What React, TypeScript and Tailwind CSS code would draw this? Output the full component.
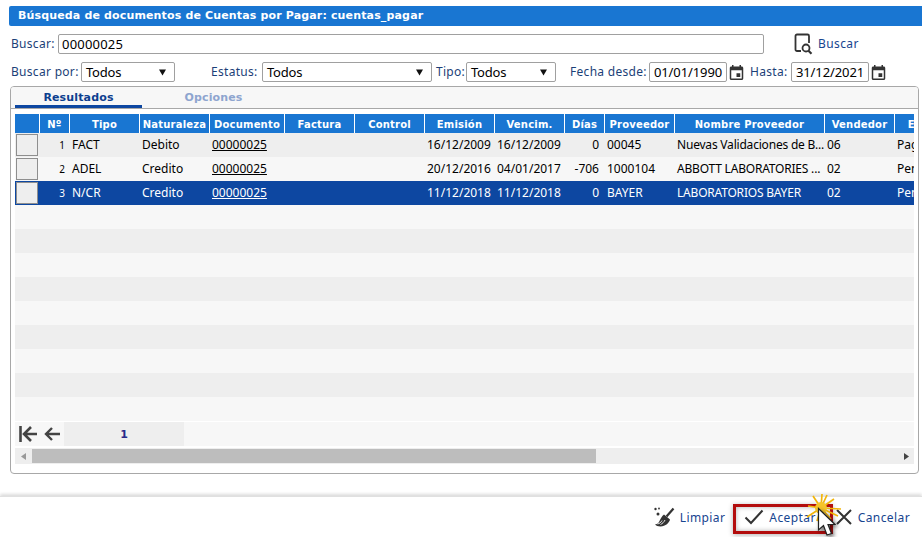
const cols = [
  { w: 24, label: "" },
  { w: 29, label: "Nº" },
  { w: 69, label: "Tipo" },
  { w: 69, label: "Naturaleza" },
  { w: 74, label: "Documento" },
  { w: 69, label: "Factura" },
  { w: 69, label: "Control" },
  { w: 69, label: "Emisión" },
  { w: 69, label: "Vencim." },
  { w: 39, label: "Días" },
  { w: 69, label: "Proveedor" },
  { w: 149, label: "Nombre Proveedor" },
  { w: 69, label: "Vendedor" },
  { w: 69, label: "Estatus" },
];

const rows = [
  ["1", "FACT", "Debito", "00000025", "", "", "16/12/2009", "16/12/2009", "0", "00045", "Nuevas Validaciones de B...", "06", "Pagado"],
  ["2", "ADEL", "Credito", "00000025", "", "", "20/12/2016", "04/01/2017", "-706", "1000104", "ABBOTT LABORATORIES ...", "02", "Pendiente"],
  ["3", "N/CR", "Credito", "00000025", "", "", "11/12/2018", "11/12/2018", "0", "BAYER", "LABORATORIOS BAYER", "02", "Pendiente"],
];

const labelClass = "text-[12px] tracking-[0.3px] text-[#1c3f78] whitespace-nowrap";
const fieldClass =
  "h-[20px] border border-[#a0a0a0] rounded-[2px] bg-white text-[13px] text-black flex items-center";

function Arrow() {
  return (
    <svg width="7" height="7" viewBox="0 0 7 7" className="shrink-0">
      <path d="M0 0.500H7L3.500 6.500Z" fill="#111" />
    </svg>
  );
}

function Sel({ w, value }: { w: string; value: string }) {
  return (
    <div className={`${fieldClass} ${w} justify-between pl-[4px] pr-[8px] pt-[1px]`}>
      <span className="tracking-[-0.2px]">{value}</span>
      <Arrow />
    </div>
  );
}

function Cal() {
  return (
    <svg width="15" height="15" viewBox="2 1 20 20" fill="#333" className="shrink-0">
      <path d="M17 12h-5v5h5v-5zM16 1v2H8V1H6v2H5c-1.11 0-1.99.9-1.99 2L3 19c0 1.1.89 2 2 2h14c1.1 0 2-.9 2-2V5c0-1.1-.9-2-2-2h-1V1h-2zm3 18H5V8h14v11z" />
    </svg>
  );
}

function DateField({ value }: { value: string }) {
  return (
    <div className={`${fieldClass} w-[78px] justify-center pt-[1px] tracking-[-0.1px]`}>{value}</div>
  );
}

function Row({ index }: { index: number }) {
  const data = rows[index];
  const selected = index === 2;
  const bg = selected ? "bg-[#0d47a1]" : index === 0 ? "bg-[#eeeeee]" : "bg-[#f7f7f7]";
  const color = selected ? "text-white" : "text-black";
  return (
    <div className={`flex h-[24px] w-max ${bg} ${color} text-[12px] leading-[24px]`}>
      <div className="w-[25px] shrink-0 pl-[1px] pt-[1px]">
        <div className="w-[22px] h-[22px] bg-[#eeeeee] border border-[#8e8e8e]" />
      </div>
      {data.map((v, i) => {
        const col = cols[i + 1];
        const right = i === 0 || i === 8;
        const link = i === 3;
        const small = i === 0;
        const name = i === 10;
        return (
          <div
            key={i}
            style={{ width: col.w + 1 }}
            className={`shrink-0 overflow-hidden whitespace-nowrap ${
              right ? (small ? "text-right pr-[5px]" : "text-right pr-[6px]") : "pl-[2px]"
            } ${small ? "text-[10px]" : ""} ${link ? "underline" : ""} ${name ? "tracking-[-0.2px]" : ""}`}
          >
            {v}
          </div>
        );
      })}
    </div>
  );
}

function EmptyRows() {
  return (
    <>
      {Array.from({ length: 9 }).map((_, i) => (
        <div key={i} className={`h-[24px] ${i % 2 === 0 ? "bg-[#f7f7f7]" : "bg-[#eeeeee]"}`} />
      ))}
    </>
  );
}

function FooterButton({ icon, label }: { icon: React.ReactNode; label: string }) {
  return (
    <div className="flex items-center gap-[5px] text-[12px] tracking-[0.4px] text-[#17458f]">
      {icon}
      <span className="pt-[1px]">{label}</span>
    </div>
  );
}

export default function App() {
  return (
    <div
      className="relative w-[922px] h-[537px] overflow-hidden bg-white flex flex-col"
      style={{ fontFamily: '"Noto Sans", Tahoma, sans-serif' }}
    >
      <div className="pl-[9px] pt-[6px]">
        <div
          className="h-[20px] bg-[#1976d2] rounded-l-[2px] pl-[9px] pt-[1px] flex items-center text-white text-[11px] font-bold tracking-[0.15px]"
          style={{ fontFamily: '"DejaVu Sans", sans-serif' }}
        >
          Búsqueda de documentos de Cuentas por Pagar: cuentas_pagar
        </div>
      </div>

      <div className="flex items-center h-[20px] mt-[8px] pl-[11px]">
        <span className={`${labelClass} w-[47px]`}>Buscar:</span>
        <div className={`${fieldClass} w-[706px] pl-[3px] pt-[1px] tracking-[0.2px]`}>00000025</div>
        <svg width="20" height="22" viewBox="0 0 20 22" fill="none" className="ml-[30px] shrink-0">
          <path d="M7 18H3a1.500 1.500 0 0 1-1.500-1.500V3A1.500 1.500 0 0 1 3 1.500h10.500A1.500 1.500 0 0 1 15 3v7" stroke="#333" strokeWidth="1.800" />
          <circle cx="12" cy="15" r="3.500" stroke="#333" strokeWidth="1.800" />
          <path d="M14.500 17.700l3 3" stroke="#333" strokeWidth="2.200" />
        </svg>
        <span className="ml-[4px] text-[12px] tracking-[0.4px] text-[#17458f]">Buscar</span>
      </div>

      <div className="flex items-center h-[20px] mt-[8px] pl-[11px]">
        <span className={`${labelClass} w-[70px]`}>Buscar por:</span>
        <Sel w="w-[94px]" value="Todos" />
        <span className={`${labelClass} ml-[36px] w-[51px]`}>Estatus:</span>
        <Sel w="w-[170px]" value="Todos" />
        <span className={`${labelClass} ml-[4px] w-[30px]`}>Tipo:</span>
        <Sel w="w-[90px]" value="Todos" />
        <span className={`${labelClass} ml-[14px] w-[79px] tracking-[0.1px]`}>Fecha desde:</span>
        <DateField value="01/01/1990" />
        <span className="ml-[2px]"><Cal /></span>
        <span className={`${labelClass} ml-[6px] w-[41px]`}>Hasta:</span>
        <DateField value="31/12/2021" />
        <span className="ml-[2px]"><Cal /></span>
      </div>

      <div className="ml-[10px] mt-[4px] w-[909px] h-[388px] border border-[#a8a8a8] rounded-[4px] overflow-hidden">
        <div className="h-[22px] bg-[#f7f7f7] border-b border-[#a8a8a8] flex pl-[4px]">
          <div
            className="w-[127px] h-[21px] border-b-[3px] border-[#0d47a1] text-center text-[11px] font-bold tracking-[0.15px] text-[#0d3f8f] leading-[21px]"
            style={{ fontFamily: '"DejaVu Sans", sans-serif' }}
          >
            Resultados
          </div>
          <div
            className="ml-[8px] w-[127px] text-center text-[11px] font-bold tracking-[0.15px] text-[#8ea5cf] leading-[21px]"
            style={{ fontFamily: '"DejaVu Sans", sans-serif' }}
          >
            Opciones
          </div>
        </div>

        <div className="mx-[4px] mt-[5px] w-[899px] overflow-hidden">
          <div
            className="flex h-[19px] w-max text-white text-[10px] font-bold tracking-[0.2px] leading-[21px]"
            style={{ fontFamily: '"DejaVu Sans", sans-serif' }}
          >
            {cols.map((c, i) => (
              <div
                key={i}
                style={{ width: c.w }}
                className="shrink-0 mr-[1px] bg-[#1976d2] text-center whitespace-nowrap overflow-hidden"
              >
                {c.label}
              </div>
            ))}
          </div>
          {rows.map((_, i) => (
            <Row key={i} index={i} />
          ))}
          <EmptyRows />
          <div className="mt-[1px] h-[24px] bg-[#f7f7f7] flex items-center">
            <svg width="20" height="20" viewBox="0 0 20 20" fill="none" stroke="#444" strokeWidth="2.600" className="ml-[3px] shrink-0">
              <path d="M2.500 2v16M19 10H5.500M13 3l-7 7 7 7" />
            </svg>
            <svg width="18" height="18" viewBox="0 0 18 18" fill="none" stroke="#444" strokeWidth="2.400" className="ml-[5px] shrink-0">
              <path d="M17 9H3M9 3L3 9l6 6" />
            </svg>
            <div className="ml-[3px] w-[120px] h-[24px] bg-[#eeeeee] text-center leading-[26px] text-[11px] font-bold text-[#2a2a8a]" style={{ fontFamily: '"DejaVu Sans", sans-serif' }}>
              1
            </div>
          </div>
          <div className="mt-[2px] h-[16px] bg-[#eeeeee] flex items-stretch">
            <div className="w-[17px] flex items-center justify-center">
              <svg width="5" height="7" viewBox="0 0 5 7"><path d="M5 0L0 3.500 5 7Z" fill="#999" /></svg>
            </div>
            <div className="my-[1px] w-[564px] bg-[#bdbdbd]" />
            <div className="flex-1 flex items-center justify-end pr-[5px]">
              <svg width="5" height="7" viewBox="0 0 5 7"><path d="M0 0L5 3.500 0 7Z" fill="#444" /></svg>
            </div>
          </div>
        </div>
      </div>

      <div className="mt-[22px] flex-1 border-t border-[#e0e0e0] shadow-[0_-2px_3px_rgba(0,0,0,0.14)] flex items-center justify-end pr-[12px]">
        <FooterButton
          label="Limpiar"
          icon={
            <svg width="21" height="20" viewBox="0 0 21 20" fill="none" className="shrink-0">
              <circle cx="1.500" cy="2" r="1.200" fill="#333" />
              <circle cx="5" cy="1.500" r="0.900" fill="#333" />
              <circle cx="4" cy="7" r="1.500" fill="#333" />
              <path d="M19.500 1.500l-7 8" stroke="#333" strokeWidth="2.200" />
              <path d="M10 7.500l6 5c-.5 3-4.500 7-9.500 7C4 19.500 2 18.500 1 17.500c3-.5 3.500-1.500 4.500-3.500 1-2.500 2.500-5 4.500-6.500z" fill="#333" />
              <path d="M6.500 17.500c2-1 3.500-2.500 4.500-4.500M3.500 17c2-.5 3.500-1.500 4.500-3.500" stroke="#fff" strokeWidth="0.900" />
            </svg>
          }
        />
        <div className="ml-[19px]">
          <FooterButton
            label="Aceptar"
            icon={
              <svg width="20" height="16" viewBox="0 0 20 16" fill="none" stroke="#333" strokeWidth="2" className="shrink-0">
                <path d="M1.500 8.500l5.500 5.500L18.500 1.500" />
              </svg>
            }
          />
        </div>
        <div className="ml-[19px]">
          <FooterButton
            label="Cancelar"
            icon={
              <svg width="18" height="18" viewBox="0 0 18 18" fill="none" stroke="#333" strokeWidth="2" className="shrink-0">
                <path d="M2 2l14 14M16 2L2 16" />
              </svg>
            }
          />
        </div>
      </div>

      <div className="absolute left-[733px] top-[504px] w-[100px] h-[30px] border-[3px] border-[#b30d0d] shadow-[0_1px_5px_rgba(0,0,0,0.3),inset_0_0_5px_rgba(0,0,0,0.3)] pointer-events-none" />
      <svg width="40" height="32" viewBox="0 0 40 32" className="absolute left-[805px] top-[493px]" stroke="#f2b50a" strokeWidth="1.700">
        <path d="M16 15L3 13M16 15L36 16M16 15L2 24M16 15L29 6M16 15L8 3M16 15L17 1M16 15L22 2M16 15L26 26M16 15L33 23M16 15L12 28" />
        <circle cx="16" cy="15" r="6" fill="#f6c52a" stroke="none" />
      </svg>
      <svg width="22" height="32" viewBox="0 0 22 32" className="absolute left-[817px] top-[507px] drop-shadow-[2px_2px_2px_rgba(0,0,0,0.55)]">
        <path d="M1.500 1.500V23l5-4.500 3.500 9.500 4.500-1.500-3.500-9H18Z" fill="#fff" stroke="#222" strokeWidth="1.200" />
      </svg>
    </div>
  );
}
